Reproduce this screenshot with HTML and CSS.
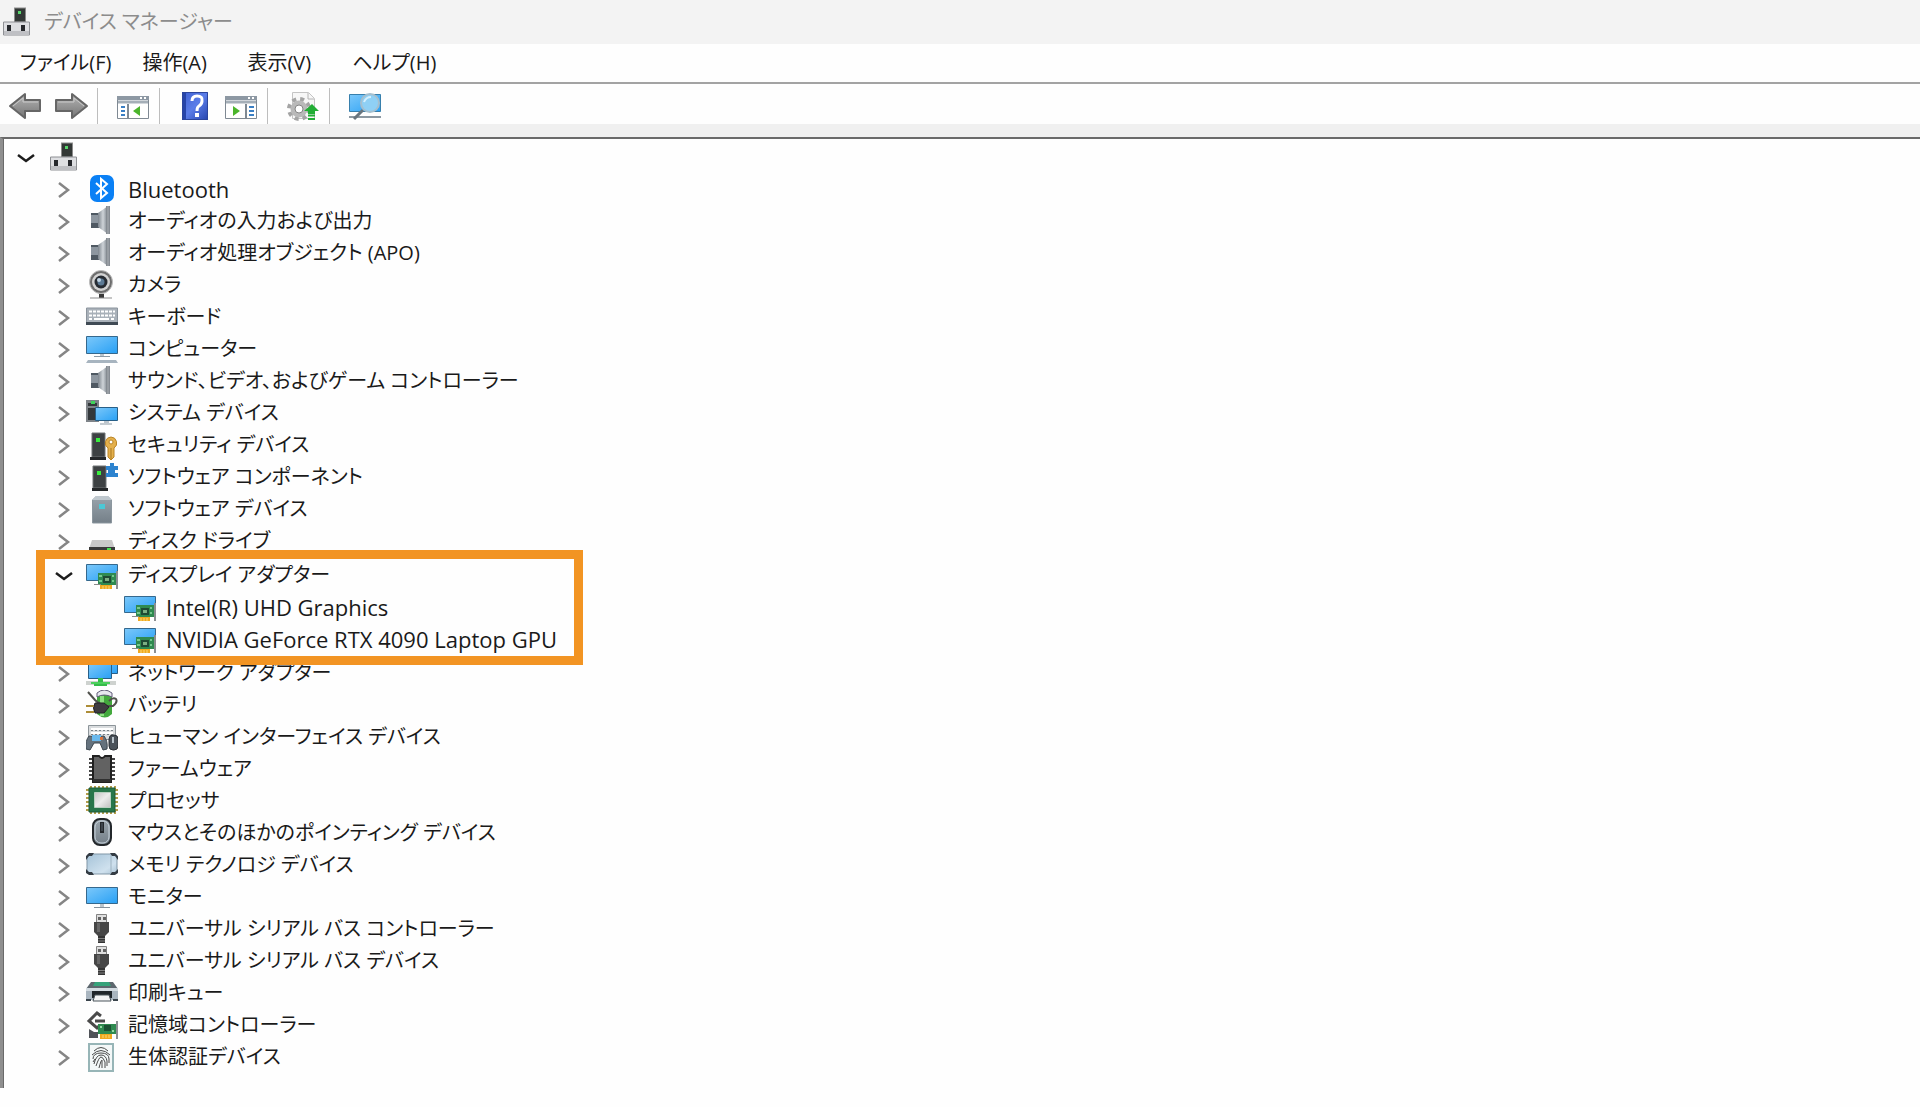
FILE: index.html
```html
<!DOCTYPE html>
<html lang="ja">
<head>
  <meta charset="UTF-8">
  <meta name="viewport" content="width=device-width, initial-scale=1">
  <title>デバイス マネージャー</title>
  <link rel="stylesheet" href="styles.css">
</head>
<body>

  <!-- Icon sprite -->
  <svg class="sprite" aria-hidden="true">
    <defs>
      <linearGradient id="g-screen" x1="0" y1="0" x2="1" y2="1">
        <stop offset="0" stop-color="#7cc8fa"/>
        <stop offset="1" stop-color="#28a0f5"/>
      </linearGradient>
      <linearGradient id="g-metal" x1="0" y1="0" x2="1" y2="0">
        <stop offset="0" stop-color="#7d858d"/>
        <stop offset=".5" stop-color="#ced3d8"/>
        <stop offset="1" stop-color="#737b83"/>
      </linearGradient>
      <linearGradient id="g-box" x1="0" y1="0" x2="0" y2="1">
        <stop offset="0" stop-color="#9aa5ad"/>
        <stop offset="1" stop-color="#747f88"/>
      </linearGradient>
      <linearGradient id="g-arrow" x1="0" y1="0" x2="0" y2="1">
        <stop offset="0" stop-color="#b4b4b4"/>
        <stop offset="1" stop-color="#757575"/>
      </linearGradient>
      <linearGradient id="g-help" x1="0" y1="0" x2="1" y2="1">
        <stop offset="0" stop-color="#3d5fd0"/>
        <stop offset=".5" stop-color="#5b7de8"/>
        <stop offset="1" stop-color="#2443ad"/>
      </linearGradient>
      <linearGradient id="g-light" x1="0" y1="0" x2="1" y2="1">
        <stop offset="0" stop-color="#a5c3d8"/>
        <stop offset=".7" stop-color="#cfe1ee"/>
        <stop offset="1" stop-color="#a9c2d4"/>
      </linearGradient>
      <linearGradient id="g-die" x1="0" y1="0" x2="1" y2="1">
        <stop offset="0" stop-color="#c4c4c4"/>
        <stop offset=".5" stop-color="#ececec"/>
        <stop offset="1" stop-color="#c0c0c0"/>
      </linearGradient>
    </defs>

    <symbol id="chevron-right" viewBox="0 0 20 20">
      <path d="M5 3l9 7-9 7" fill="none" stroke="#858585" stroke-width="2.500"/>
    </symbol>
    <symbol id="chevron-down" viewBox="0 0 20 20">
      <path d="M2 7l8 6 8-6" fill="none" stroke="#1c1c1c" stroke-width="2.500"/>
    </symbol>

    <symbol id="root" viewBox="0 0 32 32">
      <rect x="13.500" y="1" width="11" height="14" fill="#333836" stroke="#8b8b8b"/>
      <rect x="17" y="4" width="3" height="3" fill="#58d66c"/>
      <path d="M2.500 15h26v13h-26z" fill="#dedfe2" stroke="#8e9094"/>
      <path d="M3 24h25v4H3z" fill="#bfc0c4"/>
      <path d="M6 18h4v6H6zM20 18h4v6h-4z" fill="#26282c"/>
    </symbol>

    <symbol id="bluetooth" viewBox="0 0 32 32">
      <rect x="4" y="1" width="24" height="27" rx="7" fill="#0a80f5"/>
      <path d="M10 9l11 10-6 5V5l6 5-11 10" fill="none" stroke="#fff" stroke-width="2"/>
    </symbol>

    <symbol id="speaker" viewBox="0 0 32 32">
      <path d="M5 7h8v15H5z" fill="#4f5962"/>
      <path d="M5 9h8v8H5z" fill="#8d969f"/>
      <path d="M12 7L22 0v28l-10-7z" fill="url(#g-metal)"/>
      <path d="M20 0h4v28h-4z" fill="#858b92"/>
      <path d="M22 0v28" stroke="#a9aeb3"/>
    </symbol>

    <symbol id="camera" viewBox="0 0 32 32">
      <circle cx="15" cy="12" r="11.500" fill="#6d6d6d" stroke="#bdbdbd"/>
      <circle cx="15" cy="12" r="9" fill="#d3d3d3"/>
      <circle cx="15" cy="12" r="6.500" fill="#272c33"/>
      <circle cx="15" cy="12" r="3.500" fill="#5d7b96"/>
      <circle cx="13" cy="10" r="2" fill="#c2d5e4"/>
      <path d="M13 24h5v4h-5z" fill="#393939"/>
      <path d="M4 28h22" stroke="#8b8b8b" stroke-width="1"/>
    </symbol>

    <symbol id="keyboard" viewBox="0 0 32 32">
      <path d="M.5 6h31v16H.5z" fill="#a9b1b9" stroke="#8b949d"/>
      <path d="M3 9.500h26M3 13.500h26M3 17h3M25 17h4" stroke="#fff" stroke-width="2" stroke-dasharray="3 1"/>
      <path d="M8 17h15" stroke="#fff" stroke-width="2"/>
      <path d="M0 20h32v3H0z" fill="#3f4a54"/>
    </symbol>

    <symbol id="computer" viewBox="0 0 32 32">
      <path d="M.5 2.500h31v17H.5z" fill="url(#g-screen)" stroke="#35688d"/>
      <path d="M14 20h4v2h-4z" fill="#bcc5cc"/>
      <path d="M8 22.500h16" stroke="#8c9aa5"/>
      <path d="M2 26h28l2 3H0z" fill="#a7b4bf"/>
    </symbol>

    <symbol id="system" viewBox="0 0 32 32">
      <path d="M0 2h13v22H0z" fill="#7e8388"/>
      <path d="M2 5h9v3H2zM2 10h9v12H2z" fill="#33383b"/>
      <path d="M5 3h4v3H5z" fill="#3fd45b"/>
      <path d="M9.500 9.500h22v13h-22z" fill="url(#g-screen)" stroke="#285f87"/>
      <path d="M18 23h5v2h-5z" fill="#bcc5cc"/>
      <path d="M14 26h12" stroke="#8997a2" stroke-width="1"/>
    </symbol>

    <symbol id="security" viewBox="0 0 32 32">
      <path d="M6 3h13v24H6z" fill="#3d4143" stroke="#707476"/>
      <path d="M10 8h4v4h-4z" fill="#39ee3e"/>
      <path d="M4 27h16v3H4z" fill="#25282a"/>
      <path d="M25 7a6 6 0 0 1 3 11v9l-3 3-3-3v-9a6 6 0 0 1 3-11z" fill="#e4b04c" stroke="#b98426"/>
      <circle cx="25" cy="12" r="2" fill="#fff" stroke="#b98426"/>
      <path d="M25 18v11" stroke="#a87822"/>
    </symbol>

    <symbol id="component" viewBox="0 0 32 32">
      <path d="M7 4h13v22H7z" fill="#3d4143" stroke="#707476"/>
      <path d="M11 9h4v4h-4z" fill="#39ee3e"/>
      <path d="M6 26h16v3H6z" fill="#25282a"/>
      <path d="M20 4h4V1h4v3h4v4h-3v3h3v4H20v-4h2V8h-2z" fill="#2c83cf"/>
    </symbol>

    <symbol id="software" viewBox="0 0 32 32">
      <path d="M6 6l4-4h12l4 4v23H6z" fill="url(#g-box)"/>
      <path d="M6 6l4-4h12l4 4z" fill="#bfc8ce"/>
      <path d="M6.500 6v23h19V6" fill="none" stroke="#8b969e"/>
      <path d="M13 10h6v5h-6z" fill="#4cc8d5"/>
    </symbol>

    <symbol id="disk" viewBox="0 0 32 32">
      <path d="M6 14h20l3 9H3z" fill="#c9c9c9"/>
      <path d="M3 21h26v8H3z" fill="#3a3a3a"/>
      <path d="M21 22h4v2h-4z" fill="#45e04d"/>
    </symbol>

    <symbol id="display" viewBox="0 0 32 32">
      <path d="M.5 4.500h31v16H.5z" fill="url(#g-screen)" stroke="#35688d"/>
      <path d="M12 13h18v12H12z" fill="#2f8a50"/>
      <path d="M8 24h7v1H8z" fill="#8a8a8a"/>
      <path d="M17 16h8v7h-8z" fill="#1f4a33"/>
      <path d="M19 18h4v3h-4z" fill="#7cae82"/>
      <path d="M13 15h3v2h-3zM13 20h3v2h-3zM26 15h2v2h-2zM26 20h2v2h-2z" fill="#75c98d"/>
      <path d="M14 25h12v4H14z" fill="#f0a91f"/>
      <path d="M17 26v3M20 26v3M23 26v3" stroke="#fbd877"/>
      <path d="M31 11v18" stroke="#8b8f92" stroke-width="2"/>
    </symbol>

    <symbol id="network" viewBox="0 0 32 32">
      <path d="M12.500 2.500h19v13h-19z" fill="url(#g-screen)" stroke="#285f87"/>
      <path d="M2.500 5.500h23v15h-23z" fill="url(#g-screen)" stroke="#285f87"/>
      <path d="M0 23h30v4H0z" fill="#ced2cf"/>
      <path d="M12 20h5v4h4v4H8v-4h4z" fill="#35bb49"/>
      <path d="M5 24h19v2H5z" fill="#4bcf5c"/>
    </symbol>

    <symbol id="battery" viewBox="0 0 32 32">
      <path d="M11 4h15v20q-7 7-15 0z" fill="#43a83d"/>
      <path d="M14 6h4v20h-4z" fill="#8de082"/>
      <path d="M11 3q7-6 15 0v4q-8-4-15 0z" fill="#e7e7ef" stroke="#605c78"/>
      <path d="M2 2l7 8q5 5 12 6h6q5-4 3-7-3-2-7 2" fill="none" stroke="#50514c" stroke-width="2"/>
      <path d="M9 13h9l5 4-5 6H9q-3-5 0-10z" fill="#3e3b40" stroke="#232226"/>
      <path d="M0 16h8M0 22h8" stroke="#ad8d37" stroke-width="2"/>
    </symbol>

    <symbol id="hid" viewBox="0 0 32 32">
      <path d="M2.500 3.500h27v14h-27z" fill="#d9dcde" stroke="#8c9499"/>
      <path d="M5 7h22M5 11h22" stroke="#fff" stroke-width="2"/>
      <path d="M5 8.500h22M5 12.500h22" stroke="#7a8288" stroke-dasharray="2 2"/>
      <path d="M3 14q7 2 15 0 4 5 3 13l-4 1-3-7H8l-4 7-4-1q-1-8 3-13z" fill="#65727d" stroke="#3c464e"/>
      <path d="M6 13h9v6H6z" fill="#6ab9ed"/>
      <path d="M14 15h3v3h-3z" fill="#d8743d"/>
      <rect x="23" y="13" width="9" height="15" rx="4" fill="#4b535b" stroke="#2c3136"/>
      <path d="M27 15v6" stroke="#b9c4cc" stroke-width="2"/>
    </symbol>

    <symbol id="firmware" viewBox="0 0 32 32">
      <path d="M3 5h26M3 9h26M3 13h26M3 17h26M3 21h26M3 25h26" stroke="#444" stroke-width="2"/>
      <path d="M7 2h6q3 4 6 0h6v26H7z" fill="#626262" stroke="#202020" stroke-width="2"/>
      <path d="M7 25h18v3H7z" fill="#303030"/>
    </symbol>

    <symbol id="processor" viewBox="0 0 32 32">
      <path d="M4 1.500h26M4 26.500h26" stroke="#b49d4b" stroke-width="3" stroke-dasharray="2 2"/>
      <path d="M1.500 3v24M30.500 3v24" stroke="#b49d4b" stroke-width="3" stroke-dasharray="2 2"/>
      <path d="M3 2h26v24H3z" fill="#28764b" stroke="#1c5937"/>
      <path d="M8.500 6.500h16v15h-16z" fill="url(#g-die)" stroke="#b9cfc0"/>
    </symbol>

    <symbol id="mouse" viewBox="0 0 32 32">
      <rect x="7" y="1" width="18" height="26" rx="7" fill="url(#g-box)" stroke="#23272b" stroke-width="2"/>
      <rect x="9" y="3" width="14" height="22" rx="6" fill="none" stroke="#c6d1da"/>
      <path d="M16 4v11" stroke="#23272b" stroke-width="4"/>
      <path d="M16 5v8" stroke="#59636c"/>
    </symbol>

    <symbol id="memory" viewBox="0 0 32 32">
      <rect x="1" y="4" width="30" height="20" rx="3" fill="url(#g-light)" stroke="#8197a7"/>
      <path d="M25 4v20" stroke="#9db2c0"/>
      <path d="M0 10V6l3-3h5L6 6H3zM32 10V6l-3-3h-5l2 3h3zM0 19v4l3 2h5l-2-3H3zM32 19v4l-3 2h-5l2-3h3z" fill="#333b43"/>
    </symbol>

    <symbol id="monitor" viewBox="0 0 32 32">
      <path d="M.5 5.500h31v16H.5z" fill="url(#g-screen)" stroke="#35688d"/>
      <path d="M14 22h4v3h-4z" fill="#bcc5cc"/>
      <path d="M8 25.500h16" stroke="#84919b"/>
    </symbol>

    <symbol id="usb" viewBox="0 0 32 32">
      <path d="M10.500 .5h10v8h-10z" fill="#dedede" stroke="#838383"/>
      <path d="M12 3h3v3h-3zM17 3h3v3h-3z" fill="#626262"/>
      <path d="M8 8h15v10l-4 4h-7l-4-4z" fill="#464646"/>
      <path d="M11 9h3v9h-3z" fill="#666"/>
      <path d="M12 22h7v7h-7z" fill="#343434"/>
      <path d="M12 24.500h7M12 27h7" stroke="#808080"/>
    </symbol>

    <symbol id="printer" viewBox="0 0 32 32">
      <path d="M5 4h22l5 7H0z" fill="#5d676e"/>
      <path d="M9 4h14l2 4H7z" fill="#35a27a"/>
      <path d="M0 10h32v12H0z" fill="#aab6c0"/>
      <path d="M0 10h32v3H0z" fill="#d3dbe1"/>
      <path d="M6 13h20v7H6z" fill="#20262b"/>
      <path d="M9 17h14l2 6H7z" fill="#f3f4f5" stroke="#4b545b"/>
      <path d="M0 21h5v2H0zM27 21h5v2h-5z" fill="#39434b"/>
    </symbol>

    <symbol id="storage" viewBox="0 0 32 32">
      <path d="M15 6l-4-3-8 8 8 7 3-3M9 11h10" fill="none" stroke="#4a4a4a" stroke-width="3"/>
      <path d="M3 19l5 3h4v6H3z" fill="#505358"/>
      <path d="M12 14h18v10H12z" fill="#2f8a50"/>
      <path d="M18 15h7v6h-7z" fill="#1b5133"/>
      <path d="M14 16h2v2h-2zM26 20h2v2h-2z" fill="#92dba4"/>
      <path d="M14 24h12v5H14z" fill="#f0a91f"/>
      <path d="M17 25v3M20 25v3M23 25v3" stroke="#fbd877"/>
      <path d="M31 11v18" stroke="#8b8f92" stroke-width="2"/>
    </symbol>

    <symbol id="biometric" viewBox="0 0 32 32">
      <path d="M3 2h24v27H3z" fill="#f4f8f8" stroke="#97b5b7" stroke-width="2"/>
      <g fill="none" stroke="#494949" stroke-width="1">
        <path d="M8 9q7-7 14 0M6 13q9-9 18 0M7 17q0-6 8-6t8 6v4"/>
        <path d="M8 22q2-9 7-9t6 6v5M10 24q3-9 5-9t4 5v6M13 26q2-8 3-8v8M7 20l2-3"/>
      </g>
    </symbol>

    <symbol id="back" viewBox="0 0 34 30">
      <path d="M2 15L17 3v6h15v11H17v7z" fill="url(#g-arrow)" stroke="#666" stroke-width="2" stroke-linejoin="round"/>
      <path d="M5 15l10-8v4h15" fill="none" stroke="#c9c9c9"/>
    </symbol>
    <symbol id="forward" viewBox="0 0 34 30">
      <path d="M33 15L18 3v6H2v11h16v7z" fill="url(#g-arrow)" stroke="#666" stroke-width="2" stroke-linejoin="round"/>
      <path d="M4 11h16V7l10 8" fill="none" stroke="#c9c9c9"/>
    </symbol>

    <symbol id="console-tree" viewBox="0 0 34 30">
      <path d="M1.500 5.500h31v22h-31z" fill="#fff" stroke="#7f8993"/>
      <path d="M1 5h32v4H1z" fill="#8d98a3"/>
      <path d="M2 11h30" stroke="#a5afb8" stroke-width="3"/>
      <path d="M24 7h2M28 7h2" stroke="#fff" stroke-width="2"/>
      <path d="M12 13v15" stroke="#7f8993" stroke-width="2"/>
      <path d="M5 16h4M5 20h4M5 24h4" stroke="#3a7fc4" stroke-width="2"/>
      <path d="M17 20l7-5v10z" fill="#4bb52c"/>
    </symbol>
    <symbol id="action-pane" viewBox="0 0 34 30">
      <path d="M1.500 5.500h31v22h-31z" fill="#fff" stroke="#7f8993"/>
      <path d="M1 5h32v4H1z" fill="#8d98a3"/>
      <path d="M2 11h30" stroke="#a5afb8" stroke-width="3"/>
      <path d="M24 7h2M28 7h2" stroke="#fff" stroke-width="2"/>
      <path d="M22 13v15" stroke="#7f8993" stroke-width="2"/>
      <path d="M25 16h5M25 20h5M25 24h5" stroke="#3a7fc4" stroke-width="2"/>
      <path d="M16 20l-7-5v10z" fill="#4bb52c"/>
    </symbol>

    <symbol id="help" viewBox="0 0 34 30">
      <path d="M4 1h26v28H4z" fill="url(#g-help)"/>
      <path d="M4 1h4v28H4z" fill="#2644a8"/>
      <path d="M4.500 1.500h25v27h-25z" fill="none" stroke="#2b459c"/>
      <path d="M14 10q0-5 5-5 6 0 5 5 0 3-3 5-2 1-2 5" fill="none" stroke="#fff" stroke-width="3"/>
      <path d="M17 22h4v4h-4z" fill="#fff"/>
    </symbol>

    <symbol id="update" viewBox="0 0 34 30">
      <path d="M6.500 1.500h16l6 6v20h-22z" fill="#f7f7f7" stroke="#c4c4c4"/>
      <path d="M22 2v6h6" fill="none" stroke="#b4b4b4"/>
      <circle cx="13" cy="18" r="10" fill="none" stroke="#a4a4a4" stroke-width="4" stroke-dasharray="4 4"/>
      <circle cx="13" cy="18" r="6" fill="none" stroke="#b9b9b9" stroke-width="5"/>
      <circle cx="13" cy="18" r="4" fill="#fff" stroke="#858585"/>
      <path d="M26 13l7 7h-4v3h-7v-3h-4z" fill="#22ad35"/>
      <path d="M22 24.500h7M22 28h7" stroke="#22ad35" stroke-width="2"/>
    </symbol>

    <symbol id="scan" viewBox="0 0 34 30">
      <path d="M1.500 3.500h31v17h-31z" fill="url(#g-screen)" stroke="#377fac"/>
      <path d="M1 26h32" stroke="#8c98a1" stroke-width="2"/>
      <path d="M15 19l-9 9" stroke="#69757e" stroke-width="3"/>
      <circle cx="22" cy="12" r="9" fill="#8fd0f5" stroke="#a5bfce" stroke-width="2"/>
      <path d="M16 11q2-5 7-5" fill="none" stroke="#d5f0ff" stroke-width="2"/>
    </symbol>
  </svg>

  <header class="title-bar">
    <svg class="title-icon"><use href="#root"/></svg>
    <h1 class="title">デバイス マネージャー</h1>
  </header>

  <nav class="menu-bar">
    <button class="menu-item" type="button">ファイル(F)</button>
    <button class="menu-item" type="button">操作(A)</button>
    <button class="menu-item" type="button">表示(V)</button>
    <button class="menu-item" type="button">ヘルプ(H)</button>
  </nav>

  <div class="toolbar" role="toolbar">
    <button class="tool" type="button" aria-label="戻る"><svg><use href="#back"/></svg></button>
    <button class="tool" type="button" aria-label="進む"><svg><use href="#forward"/></svg></button>
    <span class="separator"></span>
    <button class="tool" type="button" aria-label="コンソール ツリーの表示"><svg><use href="#console-tree"/></svg></button>
    <span class="separator"></span>
    <button class="tool" type="button" aria-label="ヘルプ"><svg><use href="#help"/></svg></button>
    <button class="tool" type="button" aria-label="操作ウィンドウの表示"><svg><use href="#action-pane"/></svg></button>
    <span class="separator"></span>
    <button class="tool" type="button" aria-label="ドライバーの更新"><svg><use href="#update"/></svg></button>
    <span class="separator"></span>
    <button class="tool" type="button" aria-label="ハードウェア変更のスキャン"><svg><use href="#scan"/></svg></button>
  </div>

  <main class="tree-pane">
    <div class="row">
      <button class="toggle" type="button" aria-label="折りたたむ"><svg><use href="#chevron-down"/></svg></button>
      <svg class="icon"><use href="#root"/></svg>
    </div>
    <ul class="tree">
      <li class="row"><button class="toggle" type="button" aria-label="展開"><svg><use href="#chevron-right"/></svg></button><svg class="icon"><use href="#bluetooth"/></svg><span class="label latin">Bluetooth</span></li>
      <li class="row"><button class="toggle" type="button" aria-label="展開"><svg><use href="#chevron-right"/></svg></button><svg class="icon"><use href="#speaker"/></svg><span class="label">オーディオの入力および出力</span></li>
      <li class="row"><button class="toggle" type="button" aria-label="展開"><svg><use href="#chevron-right"/></svg></button><svg class="icon"><use href="#speaker"/></svg><span class="label">オーディオ処理オブジェクト (APO)</span></li>
      <li class="row"><button class="toggle" type="button" aria-label="展開"><svg><use href="#chevron-right"/></svg></button><svg class="icon"><use href="#camera"/></svg><span class="label">カメラ</span></li>
      <li class="row"><button class="toggle" type="button" aria-label="展開"><svg><use href="#chevron-right"/></svg></button><svg class="icon"><use href="#keyboard"/></svg><span class="label">キーボード</span></li>
      <li class="row"><button class="toggle" type="button" aria-label="展開"><svg><use href="#chevron-right"/></svg></button><svg class="icon"><use href="#computer"/></svg><span class="label">コンピューター</span></li>
      <li class="row"><button class="toggle" type="button" aria-label="展開"><svg><use href="#chevron-right"/></svg></button><svg class="icon"><use href="#speaker"/></svg><span class="label">サウンド、ビデオ、およびゲーム コントローラー</span></li>
      <li class="row"><button class="toggle" type="button" aria-label="展開"><svg><use href="#chevron-right"/></svg></button><svg class="icon"><use href="#system"/></svg><span class="label">システム デバイス</span></li>
      <li class="row"><button class="toggle" type="button" aria-label="展開"><svg><use href="#chevron-right"/></svg></button><svg class="icon"><use href="#security"/></svg><span class="label">セキュリティ デバイス</span></li>
      <li class="row"><button class="toggle" type="button" aria-label="展開"><svg><use href="#chevron-right"/></svg></button><svg class="icon"><use href="#component"/></svg><span class="label">ソフトウェア コンポーネント</span></li>
      <li class="row"><button class="toggle" type="button" aria-label="展開"><svg><use href="#chevron-right"/></svg></button><svg class="icon"><use href="#software"/></svg><span class="label">ソフトウェア デバイス</span></li>
      <li class="row"><button class="toggle" type="button" aria-label="展開"><svg><use href="#chevron-right"/></svg></button><svg class="icon"><use href="#disk"/></svg><span class="label">ディスク ドライブ</span></li>

      <!-- Highlighted group -->
      <li class="group">
        <div class="row"><button class="toggle" type="button" aria-label="折りたたむ"><svg><use href="#chevron-down"/></svg></button><svg class="icon"><use href="#display"/></svg><span class="label">ディスプレイ アダプター</span></div>
        <ul class="children">
          <li class="row"><svg class="icon"><use href="#display"/></svg><span class="label latin">Intel(R) UHD Graphics</span></li>
          <li class="row"><svg class="icon"><use href="#display"/></svg><span class="label latin">NVIDIA GeForce RTX 4090 Laptop GPU</span></li>
        </ul>
      </li>

      <li class="row"><button class="toggle" type="button" aria-label="展開"><svg><use href="#chevron-right"/></svg></button><svg class="icon"><use href="#network"/></svg><span class="label">ネットワーク アダプター</span></li>
      <li class="row"><button class="toggle" type="button" aria-label="展開"><svg><use href="#chevron-right"/></svg></button><svg class="icon"><use href="#battery"/></svg><span class="label">バッテリ</span></li>
      <li class="row"><button class="toggle" type="button" aria-label="展開"><svg><use href="#chevron-right"/></svg></button><svg class="icon"><use href="#hid"/></svg><span class="label">ヒューマン インターフェイス デバイス</span></li>
      <li class="row"><button class="toggle" type="button" aria-label="展開"><svg><use href="#chevron-right"/></svg></button><svg class="icon"><use href="#firmware"/></svg><span class="label">ファームウェア</span></li>
      <li class="row"><button class="toggle" type="button" aria-label="展開"><svg><use href="#chevron-right"/></svg></button><svg class="icon"><use href="#processor"/></svg><span class="label">プロセッサ</span></li>
      <li class="row"><button class="toggle" type="button" aria-label="展開"><svg><use href="#chevron-right"/></svg></button><svg class="icon"><use href="#mouse"/></svg><span class="label">マウスとそのほかのポインティング デバイス</span></li>
      <li class="row"><button class="toggle" type="button" aria-label="展開"><svg><use href="#chevron-right"/></svg></button><svg class="icon"><use href="#memory"/></svg><span class="label">メモリ テクノロジ デバイス</span></li>
      <li class="row"><button class="toggle" type="button" aria-label="展開"><svg><use href="#chevron-right"/></svg></button><svg class="icon"><use href="#monitor"/></svg><span class="label">モニター</span></li>
      <li class="row"><button class="toggle" type="button" aria-label="展開"><svg><use href="#chevron-right"/></svg></button><svg class="icon"><use href="#usb"/></svg><span class="label">ユニバーサル シリアル バス コントローラー</span></li>
      <li class="row"><button class="toggle" type="button" aria-label="展開"><svg><use href="#chevron-right"/></svg></button><svg class="icon"><use href="#usb"/></svg><span class="label">ユニバーサル シリアル バス デバイス</span></li>
      <li class="row"><button class="toggle" type="button" aria-label="展開"><svg><use href="#chevron-right"/></svg></button><svg class="icon"><use href="#printer"/></svg><span class="label">印刷キュー</span></li>
      <li class="row"><button class="toggle" type="button" aria-label="展開"><svg><use href="#chevron-right"/></svg></button><svg class="icon"><use href="#storage"/></svg><span class="label">記憶域コントローラー</span></li>
      <li class="row"><button class="toggle" type="button" aria-label="展開"><svg><use href="#chevron-right"/></svg></button><svg class="icon"><use href="#biometric"/></svg><span class="label">生体認証デバイス</span></li>
    </ul>
  </main>

</body>
</html>
```

FILE: styles.css
```css
*,
*::after {
  box-sizing: border-box;
}

body {
  margin: 0;
  background: #fefefe;
  color: #1a1a1a;
  font-family: "Open Sans", "Noto Sans CJK JP", sans-serif;
  font-size: 20px;
  line-height: 30px;
  font-feature-settings: "palt";
}

button {
  padding: 0;
  border: 0;
  background: none;
  color: inherit;
  font: inherit;
  font-feature-settings: inherit;
}

ul {
  margin: 0;
  padding: 0;
  list-style: none;
}

.sprite {
  position: absolute;
  width: 0;
  height: 0;
}

.title-bar {
  display: flex;
  align-items: center;
  gap: 11px;
  height: 44px;
  padding: 2px 0 0 1px;
  background: #f3f3f3;
}

.title-icon {
  width: 32px;
  height: 32px;
}

.title {
  margin: 0;
  padding-bottom: 2px;
  color: #8c8c8c;
  font-size: 20px;
  font-weight: normal;
}

.menu-bar {
  display: flex;
  gap: 31px;
  height: 40px;
  padding: 0 20px;
  align-items: center;
  border-bottom: 2px solid #a3a3a3;
}

.menu-item {
  min-width: 74px;
  text-align: left;
}

.toolbar {
  display: flex;
  height: 53px;
  padding: 4px 0 0 2px;
  border-bottom: 13px solid #f0f0f0;
}

.tool {
  display: flex;
  align-items: center;
  justify-content: center;
  width: 46px;
}

.tool svg {
  width: 34px;
  height: 30px;
}

.separator {
  width: 1px;
  margin: 0 12px 0 3px;
  background: #bdbdbd;
}

/* Device tree */
.tree-pane {
  padding: 3px 0 14px 13px;
  border-top: 2px solid #6a6a6a;
  border-left: 3px solid #8f8f8f;
  box-shadow: inset 1px 0 0 #6a6a6a;
}

.tree {
  padding-left: 38px;
}

.row {
  display: flex;
  align-items: center;
  height: 32px;
  white-space: nowrap;
}

.toggle {
  display: flex;
  width: 20px;
  margin-right: 12px;
}

.toggle svg {
  width: 20px;
  height: 20px;
}

.icon {
  flex: none;
  width: 32px;
  height: 32px;
  margin-right: 10px;
}

.label {
  padding-bottom: 2px;
}

.latin {
  font-size: 22px;
}

.group {
  position: relative;
  margin: 2px 0;
}

.children {
  padding-left: 70px;
}

/* Frame laid over the neighbouring rows */
.group::after {
  content: "";
  position: absolute;
  top: -10px;
  bottom: -9px;
  left: -18px;
  width: 547px;
  border: 9px solid #f29423;
  pointer-events: none;
}
```
